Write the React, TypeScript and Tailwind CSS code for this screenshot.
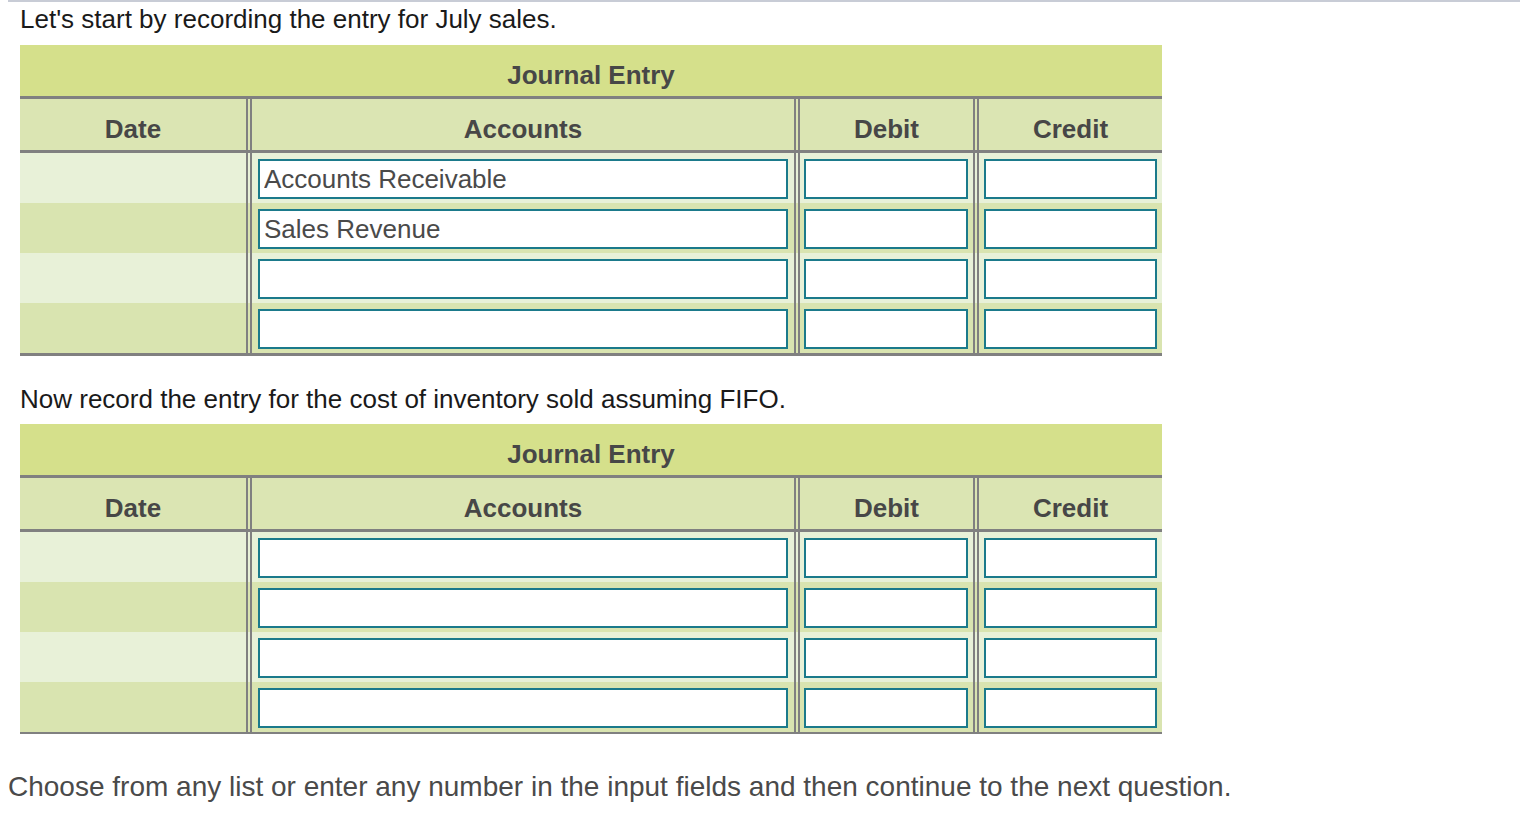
import type { ReactNode } from "react";

const font = { fontFamily: '"Liberation Sans", Arial, sans-serif' };

function Sep({ bg }: { bg: string }) {
  return <div className={`w-[6px] shrink-0 self-stretch border-x-2 border-[#808080] ${bg}`} />;
}

function Field({ value }: { value: string }) {
  return (
    <input
      readOnly
      defaultValue={value}
      className="block w-full h-[40px] border-2 border-[#1b7a8b] bg-white px-[4px] text-[26px] text-[#4a4a4a] outline-none"
    />
  );
}

function HeadCell({ w, children }: { w: string; children: ReactNode }) {
  return (
    <div className={`${w} shrink-0 flex items-center justify-center pt-[10px] text-[26px] font-bold text-[#474747]`}>
      {children}
    </div>
  );
}

function JournalTable({ accounts, bottom }: { accounts: string[]; bottom: string }) {
  return (
    <div className={`w-[1142px] ml-[20px] ${bottom} border-[#808080]`}>
      {/* title band */}
      <div className="h-[51px] bg-[#d5e08b] flex items-center justify-center pt-[10px] text-[26px] font-bold text-[#474747]">
        Journal Entry
      </div>

      {/* column heads */}
      <div className="flex h-[57px] border-y-[3px] border-[#808080] bg-[#dbe5b3]">
        <HeadCell w="w-[226px]">Date</HeadCell>
        <Sep bg="bg-[#dbe5b3]" />
        <HeadCell w="w-[542px]">Accounts</HeadCell>
        <Sep bg="bg-[#dbe5b3]" />
        <HeadCell w="w-[173px]">Debit</HeadCell>
        <Sep bg="bg-[#dbe5b3]" />
        <HeadCell w="w-[183px]">Credit</HeadCell>
      </div>

      {/* rows */}
      {accounts.map((acc, i) => {
        const bg = i % 2 === 0 ? "bg-[#e8f1d8]" : "bg-[#d9e4b0]";
        return (
          <div key={i} className={`flex h-[50px] ${bg}`}>
            <div className="w-[226px] shrink-0" />
            <Sep bg={bg} />
            <div className="w-[542px] shrink-0 px-[6px] pt-[6px]">
              <Field value={acc} />
            </div>
            <Sep bg={bg} />
            <div className="w-[173px] shrink-0 pl-[4px] pr-[5px] pt-[6px]">
              <Field value="" />
            </div>
            <Sep bg={bg} />
            <div className="w-[183px] shrink-0 px-[5px] pt-[6px]">
              <Field value="" />
            </div>
          </div>
        );
      })}
    </div>
  );
}

export default function App() {
  return (
    <div className="w-[1520px] min-h-[814px] bg-white" style={font}>
      <div className="ml-[8px] border-t-2 border-[#c8ccd6]" />
      <p className="ml-[20px] mt-[2px] mb-[11px] text-[26px] leading-[30px] text-[#1a1a1a]">
        Let's start by recording the entry for July sales.
      </p>
      <JournalTable accounts={["Accounts Receivable", "Sales Revenue", "", ""]} bottom="border-b-[3px]" />
      <p className="ml-[20px] mt-[28px] mb-[10px] text-[26px] leading-[30px] text-[#1a1a1a]">
        Now record the entry for the cost of inventory sold assuming FIFO.
      </p>
      <JournalTable accounts={["", "", "", ""]} bottom="border-b-2" />
      <p className="ml-[8px] mt-[37px] text-[28px] leading-[32px] text-[#4a4a4a]">
        Choose from any list or enter any number in the input fields and then continue to the next question.
      </p>
    </div>
  );
}
